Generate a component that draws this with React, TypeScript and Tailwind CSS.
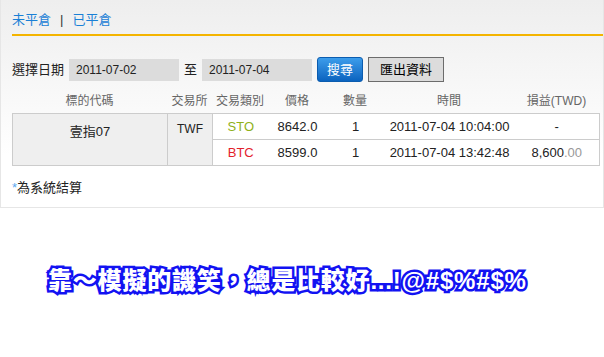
import React from "react";

const cols = ["w-[155px]", "w-[45px]", "w-[56px]", "w-[58px]", "w-[58px]", "w-[130px]", "w-[85px]"];
const headers = ["標的代碼", "交易所", "交易類別", "價格", "數量", "時間", "損益(TWD)"];

const trades = [
    {type: "STO", color: "text-[#8fb11a]", price: "8642.0", qty: "1", time: "2011-07-04 10:04:00", pnl: null},
    {type: "BTC", color: "text-[#e3222b]", price: "8599.0", qty: "1", time: "2011-07-04 13:42:48", pnl: "8,600"},
];

export default function App() {
    return (
        <div className="w-[604px] h-[357px] bg-white font-['Liberation_Sans','Noto_Sans_CJK_TC',sans-serif] text-[13px] text-[#222]">
            {/* Panel */}
            <div className="h-[208px] border-x border-b border-[#e6e6e6] bg-gradient-to-b from-[#eeeeee] to-white to-75% pl-[11px] pt-[11px]">
                <div className="flex items-center h-[18px] leading-[18px] text-[13px] text-[#1a80d6]">
                    <span>未平倉</span>
                    <span className="mx-[9px] text-[#333]">|</span>
                    <span>已平倉</span>
                </div>
                <div className="h-[2px] bg-[#f4b400] mt-[5px]"/>

                {/* Search form */}
                <div className="flex items-center h-[25px] mt-[21px]">
                    <span className="w-[57px]">選擇日期</span>
                    <div className="w-[110px] h-[22px] bg-[#dcdcdc] text-[12px] leading-[22px] pl-[7px]">2011-07-02</div>
                    <span className="ml-[5px] w-[13px]">至</span>
                    <div className="ml-[5px] w-[110px] h-[22px] bg-[#dcdcdc] text-[12px] leading-[22px] pl-[7px]">2011-07-04</div>
                    <button className="ml-[5px] w-[46px] h-[25px] rounded-[3px] border border-[#0b5caf] bg-gradient-to-b from-[#3c9deb] to-[#0a63bf] text-white text-[13px]">
                        搜尋
                    </button>
                    <button className="ml-[5px] w-[76px] h-[25px] border border-[#6c6c6c] bg-[#dcdcdc] text-black text-[13px]">
                        匯出資料
                    </button>
                </div>

                {/* Header */}
                <div className="flex mt-[11px] h-[16px] leading-[16px] text-[12px] text-[#666]">
                    {headers.map((h, i) => (
                        <div key={h} className={`${cols[i]} text-center`}>{h}</div>
                    ))}
                </div>

                {/* Table */}
                <table className="mt-[4px] w-[587px] border-collapse table-fixed">
                    <colgroup>
                        <col className="w-[155px]"/>
                        <col className="w-[45px]"/>
                        <col className="w-[56px]"/>
                        <col className="w-[58px]"/>
                        <col className="w-[58px]"/>
                        <col className="w-[130px]"/>
                        <col className="w-[85px]"/>
                    </colgroup>
                    <tbody>
                        {trades.map((t, i) => (
                            <tr key={t.type} className="h-[26px]">
                                {i === 0 && (
                                    <>
                                        <td rowSpan={2} className="border border-[#cccccc] bg-[#efefef] text-center align-top pt-[8px] text-[13px]">
                                            壹指07
                                        </td>
                                        <td rowSpan={2} className="border border-[#cccccc] bg-[#efefef] text-center align-top pt-[6px] text-[12px]">
                                            TWF
                                        </td>
                                    </>
                                )}
                                <td className={`border-y border-[#cccccc] bg-white text-center ${t.color}`}>{t.type}</td>
                                <td className="border-y border-[#cccccc] bg-white text-center">{t.price}</td>
                                <td className="border-y border-[#cccccc] bg-white text-center">{t.qty}</td>
                                <td className="border-y border-[#cccccc] bg-white text-center">{t.time}</td>
                                <td className="border-y border-r border-[#cccccc] bg-white text-center">
                                    {t.pnl ? (
                                        <>
                                            {t.pnl}
                                            <span className="text-[#999]">.00</span>
                                        </>
                                    ) : "-"}
                                </td>
                            </tr>
                        ))}
                    </tbody>
                </table>

                <p className="mt-[14px] leading-[16px]">
                    <span className="text-[#5aa8ee]">*</span>為系統結算
                </p>
            </div>

            {/* Caption */}
            <div className="pl-[48px] mt-[57px] h-[32px] leading-[32px] text-[24px] font-black text-white tracking-[0.8px] [-webkit-text-stroke:5px_#1212f2] [paint-order:stroke_fill]">
                靠～模擬的譏笑，總是比較好...!@#$%#$%
            </div>
        </div>
    );
}
